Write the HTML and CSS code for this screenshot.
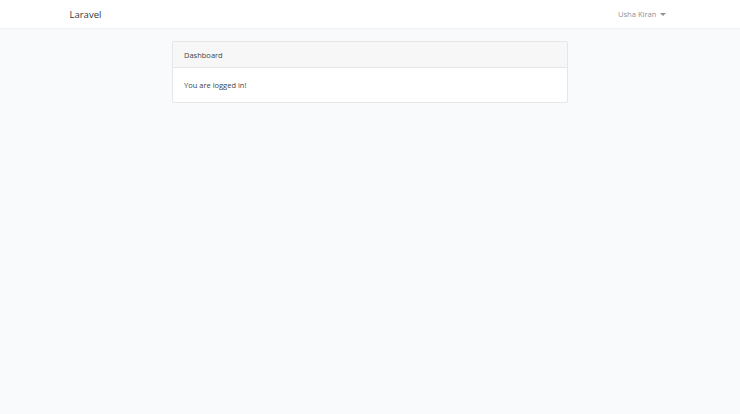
FILE: index.html
```html
<!DOCTYPE html>
<html lang="en">

<head>
    <meta charset="UTF-8">
    <meta name="viewport" content="width=device-width, initial-scale=1.0">
    <title>Laravel</title>
    <link rel="stylesheet" href="styles.css">
</head>

<body>
    <nav class="navbar">
        <div class="container nav-inner">
            <a href="javascript:;" class="brand">Laravel</a>
            <a href="javascript:;" class="user">Usha Kiran <span class="caret"></span></a>
        </div>
    </nav>
    <main class="main">
        <div class="card">
            <div class="card-header">Dashboard</div>
            <div class="card-body">You are logged in!</div>
        </div>
    </main>
</body>

</html>
```
FILE: styles.css
```css
* {
    margin: 0;
    padding: 0;
    box-sizing: border-box;
}

body {
    background-color: #f8fafc;
    font-family: "Open Sans", "Noto Sans", sans-serif;
    font-size: 7.5px;
    color: #212529;
    height: 414px;
}

a {
    text-decoration: none;
}

/* 顶部导航 */
.navbar {
    height: 28px;
    background-color: #fff;
    box-shadow: 0 1px 2px rgba(0, 0, 0, .05);
}

.container {
    width: 615px;
    margin: 0 auto;
    padding: 0 7px;
}

.nav-inner {
    display: flex;
    justify-content: space-between;
    align-items: center;
    height: 100%;
}

.brand {
    font-size: 9.5px;
    color: #343a40;
}

.user {
    display: flex;
    align-items: center;
    gap: 3px;
    font-size: 7.6px;
    color: #8f8f95;
    margin-right: 5px;
}

.caret {
    width: 0;
    height: 0;
    border-left: 3px solid transparent;
    border-right: 3px solid transparent;
    border-top: 3px solid #8f8f95;
}

/* 主体 */
.main {
    padding-top: 13px;
}

.card {
    width: 396px;
    margin: 0 auto;
    background-color: #fff;
    border: 1px solid #e6e6e6;
    border-radius: 2px;
}

.card-header {
    height: 26px;
    line-height: 26px;
    padding: 0 11px;
    background-color: #f7f7f7;
    border-bottom: 1px solid #e6e6e6;
    color: #3d4349;
}

.card-body {
    height: 34px;
    line-height: 34px;
    padding: 0 11px;
    color: #3d4349;
}
```
